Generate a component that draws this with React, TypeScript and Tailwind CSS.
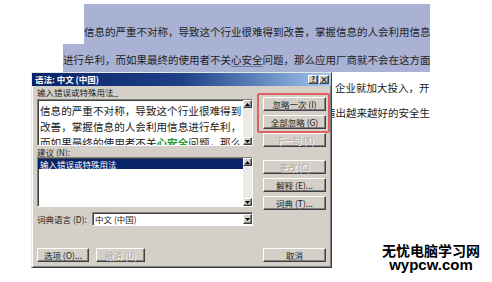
import type { ReactNode } from "react";

const raised =
  "border border-t-white border-l-white border-r-[#404040] border-b-[#404040] shadow-[inset_-1px_-1px_0_#808080] bg-[#d4d0c8]";
const sunken =
  "border border-t-[#808080] border-l-[#808080] border-r-white border-b-white shadow-[inset_1px_1px_0_#404040]";

function Arrow({ down }: { down?: boolean }) {
  return (
    <div className={`flex h-[8px] w-[9px] shrink-0 items-center justify-center ${raised}`}>
      <svg width="5" height="3" viewBox="0 0 5 3">
        <path d={down ? "M0 0h5L2.5 3z" : "M0 3h5L2.5 0z"} fill="#000" />
      </svg>
    </div>
  );
}

function ScrollBar() {
  return (
    <div className="flex w-[9px] shrink-0 flex-col bg-[#eceae4]">
      <Arrow />
      <div className="flex-1" />
      <Arrow down />
    </div>
  );
}

function Button({ children, disabled, className = "" }: { children: ReactNode; disabled?: boolean; className?: string }) {
  return (
    <div
      className={`flex h-[14px] items-center justify-center text-[8.5px] leading-none whitespace-nowrap ${raised} ${
        disabled ? "text-[#a8a5a0] [text-shadow:1px_1px_0_#fff]" : "text-[#1a1a1a]"
      } ${className}`}
    >
      {children}
    </div>
  );
}

export default function App() {
  return (
    <div className="relative h-[282px] w-[492px] overflow-hidden bg-white font-['Noto_Sans_CJK_SC',sans-serif] text-[#222]">
      {/* document */}
      <div className="pt-[4px] text-[10.5px] leading-[16px] whitespace-nowrap">
        <div className="ml-[84px] flex h-[40px] w-[346px] items-end bg-[#a9b2d4] pb-[4px]">
          信息的严重不对称，导致这个行业很难得到改善，掌握信息的人会利用信息
        </div>
        <div className="ml-[63px] flex h-[28px] w-[367px] items-end bg-[#a9b2d4] pb-[4px]">
          进行牟利，而如果最终的使用者不关
          <span className="underline decoration-[#5a7ab0] underline-offset-2">心安全</span>
          问题，那么应用厂商就不会在这方面
        </div>
        <div className="flex h-[28px] items-end pb-[4px] pl-[335px]">企业就加大投入，开</div>
        <div className="flex h-[28px] items-end pb-[7px] pl-[325px]">造出越来越好的安全生</div>
      </div>

      {/* dialog */}
      <div className="absolute left-[31px] top-[72px] flex h-[196px] w-[301px] flex-col border border-t-[#e8e6e0] border-l-[#e8e6e0] border-r-[#404040] border-b-[#404040] bg-[#d4d0c8] shadow-[inset_1px_1px_0_#fff,inset_-1px_-1px_0_#808080]">
        <div className="flex h-[13px] shrink-0 items-center justify-between bg-linear-to-r from-[#0a246a] via-[#1d3f86] to-[#a6caf0] pl-[3px] pr-[2px]">
          <span className="text-[8.5px] leading-none font-bold text-white">语法: 中文 (中国)</span>
          <div className="flex gap-[1px]">
            <div className={`flex h-[9px] w-[10px] items-center justify-center text-[7px] leading-none font-bold text-black ${raised}`}>?</div>
            <div className={`flex h-[9px] w-[10px] items-center justify-center text-[8px] leading-none font-bold text-black ${raised}`}>×</div>
          </div>
        </div>

        <div className="flex flex-1 gap-[10px] px-[5px] pb-[5px]">
          <div className="flex w-[216px] flex-col text-[8.5px] text-[#1a1a1a]">
            <div className="mt-[1px] h-[10px] leading-[10px]">输入错误或特殊用法_</div>
            <div className={`mt-[2px] flex h-[47px] bg-white ${sunken}`}>
              <div className="flex-1 overflow-hidden pl-[2px] pt-[3px] text-[10.6px] leading-[16px] whitespace-nowrap text-[#222]">
                <div>信息的严重不对称，导致这个行业很难得到</div>
                <div>改善，掌握信息的人会利用信息进行牟利，</div>
                <div>
                  而如果最终的使用者不关<span className="font-bold text-[#2a9a2a]">心安全</span>问题，那么
                </div>
              </div>
              <ScrollBar />
            </div>
            <div className="mt-[1px] h-[10px] leading-[10px]">建议 (N):</div>
            <div className={`flex h-[50px] bg-white ${sunken}`}>
              <div className="flex-1 pt-[1px]">
                <div className="h-[10px] bg-[#0a246a] pl-[2px] leading-[10px] text-white">输入错误或特殊用法</div>
              </div>
              <ScrollBar />
            </div>
            <div className="mt-[5px] flex h-[14px] items-center">
              <span className="w-[55px] shrink-0">词典语言 (D):</span>
              <div className={`flex h-[14px] flex-1 items-center bg-white ${sunken}`}>
                <span className="flex-1 pl-[2px] leading-none">中文 (中国)</span>
                <div className={`flex h-[10px] w-[9px] items-center justify-center ${raised}`}>
                  <svg width="5" height="3" viewBox="0 0 5 3">
                    <path d="M0 0h5L2.5 3z" fill="#000" />
                  </svg>
                </div>
              </div>
            </div>
            <div className="flex-1" />
            <div className="flex gap-[7px]">
              <Button className="w-[52px]">选项 (O)...</Button>
              <Button disabled className="w-[49px]">撤消 (U)</Button>
            </div>
          </div>

          <div className="flex w-[63px] flex-col pt-[11px]">
            <div className="flex flex-col gap-[4px]">
              <Button>忽略一次 (I)</Button>
              <Button>全部忽略 (G)</Button>
              <Button disabled>下一句 (X)</Button>
            </div>
            <div className="mt-[13px] flex flex-col gap-[4px]">
              <Button disabled>更改 (C)</Button>
              <Button>解释 (E)...</Button>
              <Button>词典 (T)...</Button>
            </div>
            <div className="flex-1" />
            <Button>取消</Button>
          </div>
        </div>
      </div>

      {/* annotation */}
      <div className="absolute left-[257px] top-[93px] z-10 h-[40px] w-[73px] rounded-[2px] border-2 border-solid border-[#e06060]" />

      {/* watermark */}
      <div className="absolute left-[378px] top-[243px] flex w-[106px] flex-col items-center text-black">
        <span className="text-[14px] leading-[15px] font-bold">无忧电脑学习网</span>
        <span className="font-['Liberation_Sans',sans-serif] text-[15px] leading-[13px] font-bold">wypcw.com</span>
      </div>
    </div>
  );
}
